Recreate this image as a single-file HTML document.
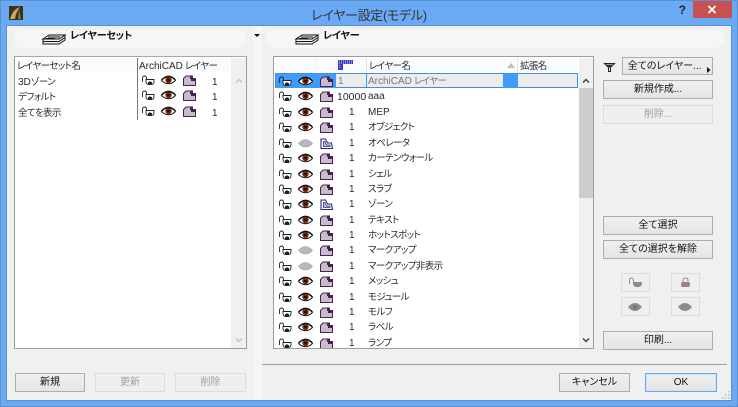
<!DOCTYPE html>
<html lang="ja"><head><meta charset="utf-8">
<style>
html,body{margin:0;padding:0}
body{width:738px;height:407px;overflow:hidden;position:relative;background:#6aaaf4;font-family:"Liberation Sans","Noto Sans CJK JP",sans-serif;font-size:9.5px;color:#2a2a2a;font-feature-settings:"palt"}
.a{position:absolute}
.t{position:absolute;white-space:nowrap;line-height:14px;height:14px;margin-top:2px;letter-spacing:-.6px}
.n{letter-spacing:0;font-size:10px}
.btn{position:absolute;box-sizing:border-box;height:19px;border:1px solid #acacac;background:linear-gradient(#f0f0f0,#e5e5e5);text-align:center;line-height:18px;font-size:10px;color:#111;white-space:nowrap}
.dis{border-color:#dcdcdc;background:#efefef;color:#a0a0a0}
svg.i{position:absolute;overflow:visible}
</style></head><body>
<svg width="0" height="0" style="position:absolute"><defs>
<g id="lk" fill="none"><path d="M1.500 7V3.500Q1.500 1 3.500 1Q5.500 1 5.500 3.500V5" stroke="#222" stroke-width=".9"/><path d="M5 4.500H13V6.500Q13 9.500 10 9.500H8Q5 9.500 5 6.500Z" fill="#fff" stroke="#222" stroke-width=".9"/><rect x="7" y="7" width="4" height="2" fill="#222"/><rect x="8.500" y="6" width="1" height="2" fill="#222"/></g>
<g id="ey"><path d="M.5 5.500Q7.500 -2 14.500 5.500Q7.500 12 .5 5.500Z" fill="#fff" stroke="#111" stroke-width=".9"/><circle cx="7.500" cy="5" r="3.200" fill="#7a2a05"/><circle cx="7.500" cy="5" r="1.300" fill="#150500"/><path d="M.5 5Q7.500 -2.500 14.500 5" fill="none" stroke="#111" stroke-width="1.300"/></g>
<g id="eh"><path d="M.5 5.500Q7.500 -2.500 14.500 5.500Q7.500 12.500 .5 5.500Z" fill="#b8b8b8" stroke="#a0a0a0" stroke-width=".6"/></g>
<g id="bx" transform="translate(0,-1)"><path d="M.5 4.500L3 2H7.500V4.500H12.500V11.500H.5Z" fill="#c4bec8" stroke="#4e1d58" stroke-width="1"/><rect x="8" y="1.500" width="2" height="5.500" fill="#4e1d58"/><rect x="10" y="4" width="3" height="3" fill="#4e1d58"/></g>
<g id="bz" transform="translate(0,-1)"><path d="M1 11.500V2H5.500L7.500 6H11.500L12.500 11.500Z" fill="#fff" stroke="#2a2a78" stroke-width="1.100"/><path d="M3.500 9.500V4.500H5L6.500 8H10V9.500Z" fill="#c6c6dc" stroke="#2a2a78" stroke-width=".8"/></g>
<g id="st"><path d="M1 6L7 2H23L17 6ZM1 6V8.500H17L23 4.500V2M1 8.500V11H17L23 7V4.500" fill="#f2f2f2" stroke="#111" stroke-width="1"/><path d="M6 4H18M4 5.500H13" stroke="#111" stroke-width="1"/></g>
</defs></svg>

<div class="a" style="left:0;top:0;width:738px;height:407px;box-sizing:border-box;border:1px solid #5b8fcf"></div>
<div class="a" style="left:7px;top:26px;width:724px;height:374px;background:#f0f0f0;outline:1px solid #5b8fcf"></div>
<div class="a" style="left:253px;top:26px;width:9px;height:374px;background:#f5f5f5"></div>

<!-- title bar -->
<svg class="i" style="left:9px;top:6px" width="14" height="14"><rect width="14" height="14" fill="#3b3018"/><path d="M1 13Q4 3 11 1Q7 6 6 13Z" fill="#caa765"/><path d="M10 3L12 13H9Z" fill="#8c7443"/></svg>
<div class="t" style="left:269px;width:200px;top:5px;margin-top:2px;text-align:center;font-size:13px;line-height:17px;height:17px;color:#333;letter-spacing:-.3px">レイヤー設定(モデル)</div>
<div class="t" style="left:676px;top:2px;margin-top:0;width:12px;text-align:center;font-size:12px;font-weight:bold;line-height:16px;color:#222">?</div>
<div class="a" style="left:693px;top:1px;width:39px;height:17px;background:#c75050"></div>
<svg class="i" style="left:693px;top:1px" width="39" height="17"><path d="M15.500 5L22.500 12M22.500 5L15.500 12" stroke="#fff" stroke-width="1.800"/></svg>

<!-- top strips -->
<div class="a" style="left:14px;top:30px;width:232px;height:18px;border-radius:9px;background:#f6f6f6"></div>
<svg class="i" style="left:42px;top:33px" width="24" height="13"><use href="#st"/></svg>
<div class="t" style="left:70px;top:28px;font-size:10px;font-weight:bold;color:#111;letter-spacing:-.2px">レイヤーセット</div>
<svg class="i" style="left:254px;top:34px" width="6" height="4"><path d="M0 0H6L3 3Z" fill="#111"/></svg>
<div class="a" style="left:266px;top:30px;width:458px;height:18px;border-radius:9px;background:#f6f6f6"></div>
<svg class="i" style="left:295px;top:33px" width="24" height="13"><use href="#st"/></svg>
<div class="t" style="left:323px;top:28px;font-size:10px;font-weight:bold;color:#111;letter-spacing:-.2px">レイヤー</div>

<!-- left list -->
<div class="a" style="left:14px;top:56px;width:233px;height:293px;box-sizing:border-box;border:1px solid #9c9c9c;border-top-color:#a8a8a8;background:#fff"></div>
<div class="a" style="left:16px;top:58px;width:214px;height:14px;background:#fafbfd"></div>
<div class="a" style="left:231px;top:58px;width:15px;height:290px;background:#f0f0f0"></div>
<div class="a" style="left:137px;top:58px;width:1px;height:62px;background:#777"></div>
<div class="t" style="left:17px;top:58px">レイヤーセット名</div>
<div class="t" style="left:139px;top:58px"><span class="n">ArchiCAD</span> レイヤー</div>
<div class="t" style="left:18px;top:74px"><span class="n">3D</span>ゾーン</div>
<div class="t" style="left:18px;top:89px">デフォルト</div>
<div class="t" style="left:18px;top:105px">全てを表示</div>
<svg class="i" style="left:141px;top:75px" width="14" height="11"><use href="#lk"/></svg>
<svg class="i" style="left:161px;top:75px" width="15" height="11"><use href="#ey"/></svg>
<svg class="i" style="left:183px;top:75px" width="13" height="12"><use href="#bx"/></svg>
<div class="t n" style="left:212px;top:74px">1</div>
<svg class="i" style="left:141px;top:90px" width="14" height="11"><use href="#lk"/></svg>
<svg class="i" style="left:161px;top:90px" width="15" height="11"><use href="#ey"/></svg>
<svg class="i" style="left:183px;top:90px" width="13" height="12"><use href="#bx"/></svg>
<div class="t n" style="left:212px;top:89px">1</div>
<svg class="i" style="left:141px;top:106px" width="14" height="11"><use href="#lk"/></svg>
<svg class="i" style="left:161px;top:106px" width="15" height="11"><use href="#ey"/></svg>
<svg class="i" style="left:183px;top:106px" width="13" height="12"><use href="#bx"/></svg>
<div class="t n" style="left:212px;top:105px">1</div>
<svg class="i" style="left:235px;top:78px" width="8" height="6"><path d="M1 4.500L4 1.500L7 4.500" fill="none" stroke="#c4c4c4" stroke-width="1.500"/></svg>
<svg class="i" style="left:235px;top:337px" width="8" height="6"><path d="M1 1.500L4 4.500L7 1.500" fill="none" stroke="#c4c4c4" stroke-width="1.500"/></svg>

<!-- right list -->
<div class="a" style="left:273px;top:56px;width:321px;height:293px;box-sizing:border-box;border:1px solid #9c9c9c;background:#fff"></div>
<div class="a" style="left:275px;top:58px;width:302px;height:14px;background:#fafbfd"></div>
<div class="a" style="left:294px;top:58px;width:1px;height:14px;background:#fff"></div>
<div class="a" style="left:315px;top:58px;width:1px;height:14px;background:#f0f0f0"></div>
<div class="a" style="left:336px;top:58px;width:1px;height:14px;background:#f0f0f0"></div>
<div class="a" style="left:366px;top:58px;width:1px;height:14px;background:#e4e4e4"></div>
<div class="a" style="left:517px;top:58px;width:1px;height:14px;background:#e4e4e4"></div>
<svg class="i" style="left:338px;top:60px" width="16" height="11"><path d="M0 0H15V4H5V10H0Z" fill="#3a3ac8"/><path d="M1 1H14M1 3H14M2 5V9" stroke="#fff" stroke-width=".7" stroke-dasharray="1 1"/></svg>
<div class="t" style="left:369px;top:58px">レイヤー名</div>
<svg class="i" style="left:507px;top:63px" width="9" height="6"><path d="M0 5L4 0L8 5Z" fill="#bdbdbd"/></svg>
<div class="t" style="left:520px;top:58px">拡張名</div>

<div class="a" style="left:275px;top:73px;width:303px;height:15px;background:#ececec;outline:1px solid #3a8fe8;outline-offset:-1px"></div>
<div class="a" style="left:276px;top:74px;width:60px;height:14px;background:#3f9cfb"></div>
<div class="a" style="left:503px;top:74px;width:15px;height:14px;background:#3f9cfb"></div>
<div class="a" style="left:366px;top:74px;width:1px;height:13px;background:#3f9cfb"></div>
<div class="a" style="left:579px;top:58px;width:14px;height:290px;background:#f0f0f0"></div>
<div class="a" style="left:579px;top:88px;width:14px;height:110px;background:#cdcdcd"></div>
<svg class="i" style="left:582px;top:78px" width="8" height="6"><path d="M1 4.500L4 1.500L7 4.500" fill="none" stroke="#444" stroke-width="1.500"/></svg>
<svg class="i" style="left:582px;top:337px" width="8" height="6"><path d="M1 1.500L4 4.500L7 1.500" fill="none" stroke="#444" stroke-width="1.500"/></svg>

<div class="a" style="left:274px;top:73px;width:304px;height:275px;overflow:hidden">
<svg class="i" style="left:4px;top:3px" width="14" height="11"><use href="#lk"/></svg><svg class="i" style="left:24px;top:3px" width="15" height="11"><use href="#ey"/></svg><svg class="i" style="left:46px;top:3px" width="13" height="12"><use href="#bx"/></svg><div class="t n" style="left:64px;top:0;color:#777">1</div><div class="t" style="left:94px;top:0;color:#777"><span class="n">ArchiCAD</span> レイヤー</div>
<svg class="i" style="left:4px;top:18px" width="14" height="11"><use href="#lk"/></svg><svg class="i" style="left:24px;top:18px" width="15" height="11"><use href="#ey"/></svg><svg class="i" style="left:46px;top:18px" width="13" height="12"><use href="#bx"/></svg><div class="t n" style="left:63px;top:15px;font-size:10.500px">10000</div><div class="t n" style="left:94px;top:15px">aaa</div>
<svg class="i" style="left:4px;top:34px" width="14" height="11"><use href="#lk"/></svg><svg class="i" style="left:24px;top:34px" width="15" height="11"><use href="#ey"/></svg><svg class="i" style="left:46px;top:34px" width="13" height="12"><use href="#bx"/></svg><div class="t n" style="left:75px;top:31px">1</div><div class="t n" style="left:94px;top:31px">MEP</div>
<svg class="i" style="left:4px;top:49px" width="14" height="11"><use href="#lk"/></svg><svg class="i" style="left:24px;top:49px" width="15" height="11"><use href="#ey"/></svg><svg class="i" style="left:46px;top:49px" width="13" height="12"><use href="#bx"/></svg><div class="t n" style="left:75px;top:46px">1</div><div class="t" style="left:94px;top:46px">オブジェクト</div>
<svg class="i" style="left:4px;top:65px" width="14" height="11"><use href="#lk"/></svg><svg class="i" style="left:24px;top:65px" width="15" height="11"><use href="#eh"/></svg><svg class="i" style="left:46px;top:65px" width="13" height="12"><use href="#bz"/></svg><div class="t n" style="left:75px;top:62px">1</div><div class="t" style="left:94px;top:62px">オペレータ</div>
<svg class="i" style="left:4px;top:80px" width="14" height="11"><use href="#lk"/></svg><svg class="i" style="left:24px;top:80px" width="15" height="11"><use href="#ey"/></svg><svg class="i" style="left:46px;top:80px" width="13" height="12"><use href="#bx"/></svg><div class="t n" style="left:75px;top:77px">1</div><div class="t" style="left:94px;top:77px">カーテンウォール</div>
<svg class="i" style="left:4px;top:96px" width="14" height="11"><use href="#lk"/></svg><svg class="i" style="left:24px;top:96px" width="15" height="11"><use href="#ey"/></svg><svg class="i" style="left:46px;top:96px" width="13" height="12"><use href="#bx"/></svg><div class="t n" style="left:75px;top:93px">1</div><div class="t" style="left:94px;top:93px">シェル</div>
<svg class="i" style="left:4px;top:111px" width="14" height="11"><use href="#lk"/></svg><svg class="i" style="left:24px;top:111px" width="15" height="11"><use href="#ey"/></svg><svg class="i" style="left:46px;top:111px" width="13" height="12"><use href="#bx"/></svg><div class="t n" style="left:75px;top:108px">1</div><div class="t" style="left:94px;top:108px">スラブ</div>
<svg class="i" style="left:4px;top:126px" width="14" height="11"><use href="#lk"/></svg><svg class="i" style="left:24px;top:126px" width="15" height="11"><use href="#ey"/></svg><svg class="i" style="left:46px;top:126px" width="13" height="12"><use href="#bz"/></svg><div class="t n" style="left:75px;top:123px">1</div><div class="t" style="left:94px;top:123px">ゾーン</div>
<svg class="i" style="left:4px;top:142px" width="14" height="11"><use href="#lk"/></svg><svg class="i" style="left:24px;top:142px" width="15" height="11"><use href="#ey"/></svg><svg class="i" style="left:46px;top:142px" width="13" height="12"><use href="#bx"/></svg><div class="t n" style="left:75px;top:139px">1</div><div class="t" style="left:94px;top:139px">テキスト</div>
<svg class="i" style="left:4px;top:157px" width="14" height="11"><use href="#lk"/></svg><svg class="i" style="left:24px;top:157px" width="15" height="11"><use href="#ey"/></svg><svg class="i" style="left:46px;top:157px" width="13" height="12"><use href="#bx"/></svg><div class="t n" style="left:75px;top:154px">1</div><div class="t" style="left:94px;top:154px">ホットスポット</div>
<svg class="i" style="left:4px;top:172px" width="14" height="11"><use href="#lk"/></svg><svg class="i" style="left:24px;top:172px" width="15" height="11"><use href="#eh"/></svg><svg class="i" style="left:46px;top:172px" width="13" height="12"><use href="#bx"/></svg><div class="t n" style="left:75px;top:169px">1</div><div class="t" style="left:94px;top:169px">マークアップ</div>
<svg class="i" style="left:4px;top:188px" width="14" height="11"><use href="#lk"/></svg><svg class="i" style="left:24px;top:188px" width="15" height="11"><use href="#eh"/></svg><svg class="i" style="left:46px;top:188px" width="13" height="12"><use href="#bx"/></svg><div class="t n" style="left:75px;top:185px">1</div><div class="t" style="left:94px;top:185px">マークアップ非表示</div>
<svg class="i" style="left:4px;top:203px" width="14" height="11"><use href="#lk"/></svg><svg class="i" style="left:24px;top:203px" width="15" height="11"><use href="#ey"/></svg><svg class="i" style="left:46px;top:203px" width="13" height="12"><use href="#bx"/></svg><div class="t n" style="left:75px;top:200px">1</div><div class="t" style="left:94px;top:200px">メッシュ</div>
<svg class="i" style="left:4px;top:219px" width="14" height="11"><use href="#lk"/></svg><svg class="i" style="left:24px;top:219px" width="15" height="11"><use href="#ey"/></svg><svg class="i" style="left:46px;top:219px" width="13" height="12"><use href="#bx"/></svg><div class="t n" style="left:75px;top:216px">1</div><div class="t" style="left:94px;top:216px">モジュール</div>
<svg class="i" style="left:4px;top:234px" width="14" height="11"><use href="#lk"/></svg><svg class="i" style="left:24px;top:234px" width="15" height="11"><use href="#ey"/></svg><svg class="i" style="left:46px;top:234px" width="13" height="12"><use href="#bx"/></svg><div class="t n" style="left:75px;top:231px">1</div><div class="t" style="left:94px;top:231px">モルフ</div>
<svg class="i" style="left:4px;top:249px" width="14" height="11"><use href="#lk"/></svg><svg class="i" style="left:24px;top:249px" width="15" height="11"><use href="#ey"/></svg><svg class="i" style="left:46px;top:249px" width="13" height="12"><use href="#bx"/></svg><div class="t n" style="left:75px;top:246px">1</div><div class="t" style="left:94px;top:246px">ラベル</div>
<svg class="i" style="left:4px;top:265px" width="14" height="11"><use href="#lk"/></svg><svg class="i" style="left:24px;top:265px" width="15" height="11"><use href="#ey"/></svg><svg class="i" style="left:46px;top:265px" width="13" height="12"><use href="#bx"/></svg><div class="t n" style="left:75px;top:262px">1</div><div class="t" style="left:94px;top:262px">ランプ</div>
</div>

<!-- right column -->
<svg class="i" style="left:604px;top:63px" width="11" height="9"><path d="M.5 .5H10.500L6.500 4.500V8.500H4.500V4.500Z" fill="#fff" stroke="#222"/><path d="M2 1.500H9L6 4.500H5Z" fill="#333"/></svg>
<div class="btn" style="left:622px;top:57px;width:91px;height:18px;line-height:17px;padding-right:6px">全てのレイヤー...</div>
<svg class="i" style="left:707px;top:67px" width="4" height="6"><path d="M0 0L3.500 3L0 6Z" fill="#111"/></svg>
<div class="btn" style="left:603px;top:80px;width:110px">新規作成...</div>
<div class="btn dis" style="left:603px;top:105px;width:110px">削除...</div>
<div class="btn" style="left:603px;top:216px;width:110px">全て選択</div>
<div class="btn" style="left:603px;top:240px;width:110px">全ての選択を解除</div>
<div class="btn dis" style="left:621px;top:273px;width:29px"></div>
<div class="btn dis" style="left:671px;top:273px;width:29px"></div>
<div class="btn dis" style="left:621px;top:297px;width:29px"></div>
<div class="btn dis" style="left:671px;top:297px;width:29px"></div>
<svg class="i" style="left:628px;top:277px" width="15" height="11"><path d="M1.500 7V3.500Q1.500 1 3.500 1Q5.500 1 5.500 3.500V5" stroke="#8f8f8f" fill="none"/><path d="M5 5H14V7Q13 10 10 10H8Q6 10 5 7Z" fill="#8c8c8c"/></svg>
<svg class="i" style="left:680px;top:277px" width="11" height="11"><path d="M3 5V3Q3 1 5.500 1Q8 1 8 3V5" stroke="#8f8f8f" fill="none"/><rect x="1" y="5" width="9" height="5" rx="2" fill="#a08088"/></svg>
<svg class="i" style="left:628px;top:302px" width="15" height="10"><path d="M0 5Q7 -3 14 5Q7 13 0 5Z" fill="#8c8c8c"/><circle cx="7" cy="5" r="2" fill="#777"/></svg>
<svg class="i" style="left:678px;top:302px" width="15" height="10"><path d="M0 5Q7 -3 14 5Q7 13 0 5Z" fill="#8c8c8c"/></svg>
<div class="btn" style="left:603px;top:331px;width:110px">印刷...</div>

<!-- bottom -->
<div class="btn" style="left:15px;top:373px;width:70px">新規</div>
<div class="btn dis" style="left:95px;top:373px;width:70px">更新</div>
<div class="btn dis" style="left:175px;top:373px;width:71px">削除</div>
<div class="a" style="left:262px;top:364px;width:465px;height:1px;background:#a0a0a0"></div>
<div class="btn" style="left:559px;top:373px;width:71px">キャンセル</div>
<div class="btn" style="left:645px;top:373px;width:72px;border-color:#6aa8e8;box-shadow:inset 0 0 0 1px #cfe3f7">OK</div>
<svg class="i" style="left:722px;top:391px" width="8" height="8"><path d="M6 0h1.500v1.500H6zM3 3h1.500v1.500H3zM6 3h1.500v1.500H6zM0 6h1.500v1.500H0zM3 6h1.500v1.500H3zM6 6h1.500v1.500H6z" fill="#bbb"/></svg>
</body></html>
